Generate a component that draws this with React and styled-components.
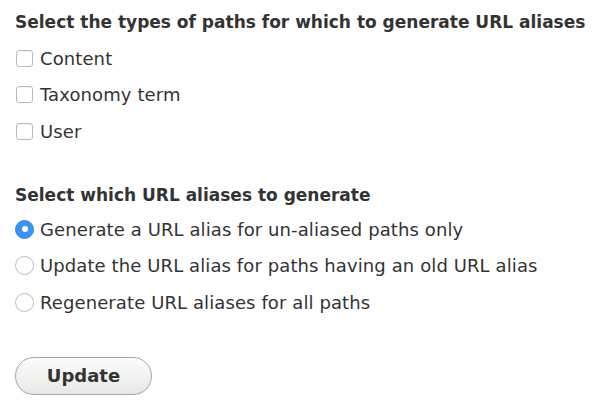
import React from "react";
import styled, { createGlobalStyle } from "styled-components";

const Global = createGlobalStyle`
  html, body { margin: 0; padding: 0; background: #fff; }
  body { font-family: "DejaVu Sans", "Liberation Sans", sans-serif; color: #333; }
`;

const Page = styled.div`
  display: flex;
  flex-direction: column;
  padding: 11px 0 0 15px;
`;

const Fieldset = styled.div`
  display: flex;
  flex-direction: column;
  margin-bottom: ${(p) => p.$mb || 0}px;
`;

const Legend = styled.div`
  font-size: 17px;
  font-weight: bold;
  line-height: 22px;
  color: #333;
  margin-bottom: ${(p) => p.$mb}px;
`;

const Option = styled.label`
  display: flex;
  align-items: center;
  height: 36.5px;
  font-size: 18px;
  letter-spacing: 0.1px;
  color: #333;
  gap: ${(p) => p.$gap}px;
`;

const Box = styled.span`
  width: 17px;
  height: 17px;
  box-sizing: border-box;
  border: 1px solid #b9b9b9;
  border-radius: 3px;
  background: #fff;
  margin-left: 1px;
  box-shadow: inset 0 1px 1px rgba(0,0,0,0.05);
`;

const Radio = styled.span`
  width: 19px;
  height: 19px;
  box-sizing: border-box;
  border-radius: 50%;
  display: flex;
  align-items: center;
  justify-content: center;
  background: ${(p) => (p.$checked ? "#3a92f4" : "#fff")};
  border: 1px solid ${(p) => (p.$checked ? "#3288ee" : "#bdbdbd")};
  &::after {
    content: "";
    display: ${(p) => (p.$checked ? "block" : "none")};
    width: 6px;
    height: 6px;
    border-radius: 50%;
    background: #fff;
  }
`;

const Button = styled.button`
  width: 137px;
  height: 38px;
  border-radius: 19px;
  border: 1px solid #a6a6a6;
  background: linear-gradient(#fcfcfc, #e8e8e6);
  font-family: "DejaVu Sans", sans-serif;
  font-weight: bold;
  font-size: 18px;
  color: #333;
  padding: 0;
  box-shadow: 0 1px 2px rgba(0,0,0,0.08);
`;

export default function App() {
  return (
    <>
      <Global />
      <Page>
        <Fieldset $mb={34.5}>
          <Legend $mb={7}>Select the types of paths for which to generate URL aliases</Legend>
          {["Content", "Taxonomy term", "User"].map((t) => (
            <Option key={t} $gap={7}>
              <Box />
              {t}
            </Option>
          ))}
        </Fieldset>
        <Fieldset $mb={36}>
          <Legend $mb={5}>Select which URL aliases to generate</Legend>
          {[
            "Generate a URL alias for un-aliased paths only",
            "Update the URL alias for paths having an old URL alias",
            "Regenerate URL aliases for all paths",
          ].map((t, i) => (
            <Option key={t} $gap={6}>
              <Radio $checked={i === 0} />
              {t}
            </Option>
          ))}
        </Fieldset>
        <div>
          <Button>Update</Button>
        </div>
      </Page>
    </>
  );
}
